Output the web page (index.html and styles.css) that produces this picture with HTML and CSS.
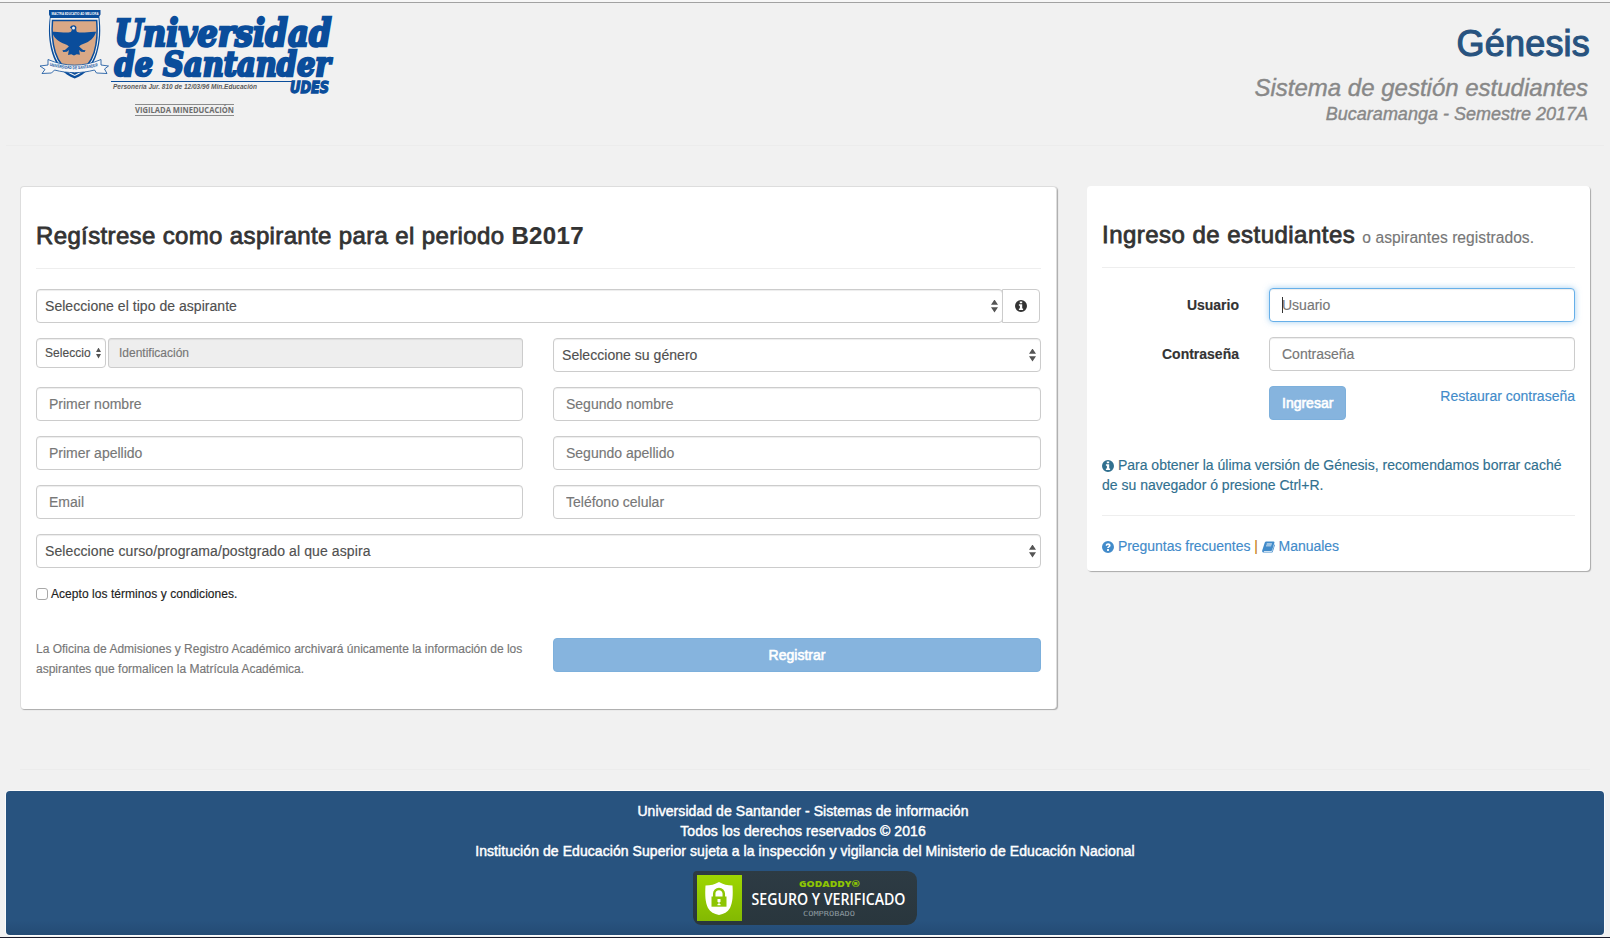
FILE: index.html
```html
<!DOCTYPE html>
<html lang="es">
<head>
<meta charset="utf-8">
<title>Génesis - Universidad de Santander</title>
<link rel="stylesheet" href="styles.css">
</head>
<body>
<svg class="defs" width="0" height="0" aria-hidden="true">
  <symbol id="i-info" viewBox="0 0 12 12"><path fill-rule="evenodd" d="M6 0a6 6 0 1 1 0 12A6 6 0 0 1 6 0ZM4.800 1.500v1.700h2.400V1.500ZM3.900 4.300v1.500h1v2.700h-1V10h4.200V8.500h-.9V4.300Z"/></symbol>
  <symbol id="i-help" viewBox="0 0 12 12"><path fill-rule="evenodd" d="M6 0a6 6 0 1 1 0 12A6 6 0 0 1 6 0ZM3.500 4.300l1.400.7c.3-.6.6-.9 1.100-.9.500 0 .8.200.8.600 0 .8-1.700.9-1.700 2.400h1.800c0-.9 1.700-1.100 1.700-2.600C8.600 3 7.500 2.200 6.100 2.200 4.800 2.200 4 2.900 3.500 4.300ZM5.100 8.100v1.800h1.800V8.100Z"/></symbol>
  <symbol id="i-book" viewBox="0 0 13 12"><path fill-rule="evenodd" d="M4.300.5h7.200c.8 0 1.100.6.9 1.200L10.200 9c-.2.700-.6 1-1.300 1H2.200c-.5 0-.6.700.1.700h7.200c.4 0 .6-.2.700-.5l2.200-7c.6.400.6.800.4 1.400L10.900 10.400c-.3.800-.8 1.200-1.600 1.200H2C.7 11.600-.1 10.500.2 9.500L2.800 1.500C3.100.8 3.600.5 4.300.5ZM4.800 2.500l-.3.900h5.200l.3-.9ZM4.200 4.400l-.3.900h5.200l.3-.9Z"/></symbol>
</svg>
<header class="header">
  <svg class="logo" width="310" height="120" viewBox="30 0 310 120">
    <g>
      <path fill="#0a4d9b" d="M51 10h49.500v4.500l-1.200 2c1.800 13 1.200 25-2.300 37-3.500 12-11 20.500-22.300 25-11.500-4.500-19-13-22.500-25-3.500-12-4-24-2.300-37L49 14.500V10Z"/>
      <path fill="#f1f1f1" d="M50.500 18h48c1.200 13 .5 24-2.800 35-3.500 11-10.500 19-21 23-10.500-4-17.500-12-21-23-3.400-11-4.300-22-3.200-35Z"/>
      <path fill="#d9a886" stroke="#0a4d9b" stroke-width="1.500" d="M52.500 20.500h44.200c1 11 .4 22-2.600 32-3.200 10.500-9.500 17.500-19.400 21.500-9.900-4-16.200-11-19.400-21.500-3-10-3.800-21-2.800-32Z"/>
      <path fill="#0a4d9b" d="M70 27.500c.8-2 2.500-2.600 4.200-2.300 1.800.3 2.600 1.700 2.100 3.500-.2 1.200 0 2 .8 3.300 6 1.600 12-.8 19-.3-1.600 5.800-6 9.800-13 12.300-1.800.7-3 1.300-4 2.500l4 3.500 2.500.2-1 1.800-3.500-.3-2-1.600.8 4.700-3.200-.6-2.700 1.300-2.800-1.300-3.200.8.900-4.900-2 1.600-3.700.3-.8-1.800 2.500-.2 4-3.600c-1-1.200-2.400-1.800-4.200-2.500-7-2.600-11.200-6.500-12.600-12.200 7-.5 13 2 18.600.3 1-1 1.200-1.800.9-3Z"/>
      <circle cx="73.500" cy="28" r="1.500" fill="#f1f1f1"/>
      <path fill="#f7f7f7" stroke="#0a4d9b" stroke-width=".8" d="M40 66l8-1v-5.500c17 7.500 36 7.500 53 0V65l7.500 1-4 3 2.500 4.500-10.500-.5-2-3c-13 3.500-27 3.500-40 0l-3 3-9.500.5 3-4Z"/>
      <path id="ribbon" fill="none" d="M49.500 65.800c17 4.500 33 4.500 50 0"/>
      <text class="crest-text" font-size="4.400"><textPath href="#ribbon" textLength="49" lengthAdjust="spacingAndGlyphs">UNIVERSIDAD DE SANTANDER</textPath></text>
      <text class="crest-band" x="51.500" y="15.200" font-size="4.400" textLength="47" lengthAdjust="spacingAndGlyphs">MACTRA EDUCATIO AD MELIORA</text>
    </g>
    <text class="logo-name" x="114.500" y="45.700" font-size="38" textLength="217" lengthAdjust="spacingAndGlyphs">Universidad</text>
    <text class="logo-name" x="114.500" y="75.700" font-size="34" textLength="216" lengthAdjust="spacingAndGlyphs">de Santander</text>
    <path stroke="#0a4d9b" stroke-width="1" d="M111 81.500h181"/>
    <text class="logo-udes" x="290" y="93" font-size="16" textLength="39" lengthAdjust="spacingAndGlyphs">UDES</text>
    <text class="logo-legal" x="113" y="89" textLength="144" lengthAdjust="spacingAndGlyphs">Personería Jur. 810 de 12/03/96 Min.Educación</text>
    <path stroke="#8a8a8a" stroke-width="1" d="M135 104.500h99M135 115.500h99"/>
    <text class="logo-vig" x="135" y="113" textLength="99" lengthAdjust="spacingAndGlyphs">VIGILADA MINEDUCACIÓN</text>
  </svg>
  <div class="brand">
    <h1 class="brand-name">Génesis</h1>
    <p class="brand-sub">Sistema de gestión estudiantes</p>
    <p class="brand-term">Bucaramanga - Semestre 2017A</p>
  </div>
</header>

<main class="main">
  <section class="panel panel-register">
    <h2 class="title title-register">Regístrese como aspirante para el periodo <b>B2017</b></h2>
    <form class="form">
      <div class="input-group">
        <div class="control select"><span>Seleccione el tipo de aspirante</span><i class="arrows"></i></div>
        <button type="button" class="addon"><svg class="icon" width="12" height="12"><use href="#i-info"/></svg></button>
      </div>
      <div class="row">
        <div class="id-group">
          <div class="control select small"><span>Seleccio</span><i class="arrows"></i></div>
          <input class="control small" placeholder="Identificación" disabled>
        </div>
        <div class="control select"><span>Seleccione su género</span><i class="arrows"></i></div>
      </div>
      <div class="row"><input class="control" placeholder="Primer nombre"><input class="control" placeholder="Segundo nombre"></div>
      <div class="row"><input class="control" placeholder="Primer apellido"><input class="control" placeholder="Segundo apellido"></div>
      <div class="row"><input class="control" placeholder="Email"><input class="control" placeholder="Teléfono celular"></div>
      <div class="control select"><span class="program">Seleccione curso/programa/postgrado al que aspira</span><i class="arrows"></i></div>
      <label class="terms"><i class="check"></i>Acepto los términos y condiciones.</label>
      <div class="row row-submit">
        <p class="note">La Oficina de Admisiones y Registro Académico archivará únicamente la información de los<br>aspirantes que formalicen la Matrícula Académica.</p>
        <button type="button" class="btn">Registrar</button>
      </div>
    </form>
  </section>

  <section class="panel panel-login">
    <h2 class="title title-login">Ingreso de estudiantes <small>o aspirantes registrados.</small></h2>
    <form class="login">
      <label class="label">Usuario</label>
      <div class="focus-wrap"><input class="control focused" placeholder="Usuario"><i class="caret"></i></div>
      <label class="label">Contraseña</label>
      <input class="control" placeholder="Contraseña">
      <div class="actions"><button type="button" class="btn">Ingresar</button><a class="restore">Restaurar contraseña</a></div>
    </form>
    <p class="info"><svg class="icon" width="12" height="12"><use href="#i-info"/></svg> <span>Para obtener la úlima versión de Génesis, recomendamos borrar caché</span><br><span>de su navegador ó presione Ctrl+R.</span></p>
    <p class="links"><a><svg class="icon" width="12" height="12"><use href="#i-help"/></svg> <span>Preguntas frecuentes</span></a> <span class="bar">|</span> <a><svg class="icon" width="13" height="12"><use href="#i-book"/></svg> Manuales</a></p>
  </section>
</main>

<footer class="footer">
  <p class="f-short">Universidad de Santander - Sistemas de información</p>
  <p class="f-short">Todos los derechos reservados © 2016</p>
  <p>Institución de Educación Superior sujeta a la inspección y vigilancia del Ministerio de Educación Nacional</p>
  <svg class="seal" width="224" height="54" viewBox="0 0 224 54">
    <defs>
      <linearGradient id="dark" x2="0" y2="1"><stop stop-color="#2d3b44"/><stop offset="1" stop-color="#29363d"/></linearGradient>
      <linearGradient id="green" x2="0" y2="1"><stop stop-color="#9ed602"/><stop offset="1" stop-color="#83b902"/></linearGradient>
    </defs>
    <path fill="url(#dark)" d="M4 0h210q10 1 10 10v34q-1 9-10 10H8q-7-1-8-8V4q0-4 4-4Z"/>
    <path fill="url(#green)" d="M4 4h45v46H4Z"/>
    <path fill="#fff" d="M26 11c4 2.500 8.500 3.500 13.500 3.500.6 10 .2 17-2.500 22.500-2.400 4-6 6-11 7-5-1-8.600-3-11-7-2.700-5.500-3.100-12.500-2.500-22.500C17.500 14.500 22 13.500 26 11Z"/>
    <path fill="none" stroke="#8dc503" stroke-width="2.500" d="M21.200 26v-3.200a4.800 4.800 0 0 1 9.600 0V26"/>
    <path fill="#8dc503" d="M18.500 25.500h15v10.200h-15Z"/>
    <path fill="#fff" d="M24.500 28h3v3h-1v2h1v1.200h-3V33h1v-2h-1Z"/>
    <text class="s-top" x="106" y="16" textLength="61" lengthAdjust="spacingAndGlyphs">GODADDY®</text>
    <text class="s-mid" x="58.500" y="34.200" textLength="154" lengthAdjust="spacingAndGlyphs">SEGURO Y VERIFICADO</text>
    <text class="s-low" x="110" y="44.500" textLength="52" lengthAdjust="spacingAndGlyphs">COMPROBADO</text>
  </svg>
</footer>
<div class="bottom-edge"></div>
</body>
</html>
```
FILE: styles.css
```css
* { box-sizing: border-box; }
html, body { height: 938px; overflow: hidden; }
body {
  margin: 0;
  padding: 0 6px;
  background: linear-gradient(#f7f7f7 0 2px, #a2a2a2 2px 3px, #f1f1f1 3px);
  font: 14px/20px "Liberation Sans", Arial, sans-serif;
  color: #333;
  -webkit-text-stroke-width: .15px;
  display: flex;
  flex-direction: column;
}
p, h1, h2 { margin: 0; font-weight: 400; }
.defs { position: absolute; }

.header {
  height: 146px;
  flex: none;
  display: flex;
  justify-content: space-between;
  padding: 0 14px 0 24px;
  border-bottom: 1px solid #ececec;
}
.logo { overflow: visible; -webkit-text-stroke-width: 0; }
.brand { text-align: right; padding-top: 24px; }
.brand-name { font-size: 36px; line-height: 40px; color: #28537f; -webkit-text-stroke: 1.100px #28537f; letter-spacing: .2px; }
.brand-sub, .brand-term { font-style: italic; color: #888; -webkit-text-stroke: .4px #888; padding-right: 2px; }
.brand-sub { font-size: 24px; line-height: 28px; margin-top: 10px; }
.brand-term { font-size: 18px; line-height: 24px; }

.logo-name {
  font-family: "DejaVu Serif", serif;
  font-weight: 700;
  font-style: italic;
  fill: #0a4d9b;
  -webkit-text-stroke: 0;
  stroke: #0a4d9b;
  stroke-width: 2.600px;
}
.logo-udes {
  font-family: "DejaVu Sans Condensed", "DejaVu Sans", sans-serif;
  font-weight: 700;
  font-style: italic;
  fill: #0a4d9b;
  stroke: #0a4d9b;
  stroke-width: 1.300px;
}
.logo-legal { font: italic 700 7px "Liberation Sans", sans-serif; fill: #5a5a5a; }
.logo-vig { font: 700 8.500px "Open Sans", sans-serif; fill: #6c6c6c; }
.crest-text { font-family: "Liberation Sans", sans-serif; font-weight: 700; fill: #0a4d9b; }
.crest-band { font-family: "Liberation Sans", sans-serif; font-weight: 700; fill: #fff; }

.main {
  display: grid;
  grid-template-columns: 1037px 503px;
  justify-content: space-between;
  align-items: start;
  margin: 0 14px;
  padding-top: 40px;
  border-bottom: 1px solid #ececec;
  height: 624px;
  flex: none;
}
.panel { background: #fff; border-radius: 4px; box-shadow: 1px 1px 1px #a9a9a9; }
.panel-register { height: 523px; padding: 0 16px; border: 1px solid #ddd; border-width: 1px 1px 0; }
.panel-login { height: 385px; padding: 0 15px; }
.title { height: 82px; font-size: 24px; line-height: 28px; -webkit-text-stroke: .8px #333; border-bottom: 1px solid #eee; white-space: nowrap; }
.title b { font-weight: 700; -webkit-text-stroke: .2px #333; }
.title-register { padding-top: 35px; margin: 0 -1px 20px; letter-spacing: .36px; }
.title-login { padding-top: 35px; margin-bottom: 20px; letter-spacing: .47px; }
.title small { font-size: 15.600px; color: #777; letter-spacing: .04px; -webkit-text-stroke: .15px #777; }

.form { display: grid; gap: 15px; margin: 0 -1px; }
.row { display: grid; grid-template-columns: 487px 488px; justify-content: space-between; align-items: start; }
.control {
  width: 100%;
  height: 34px;
  margin: 0;
  padding: 6px 12px;
  border: 1px solid #ccc;
  border-radius: 4px;
  background: #fff;
  box-shadow: inset 0 1px 1px rgba(0,0,0,.075);
  font: inherit;
  color: #555;
}
.control::placeholder { color: #777; opacity: 1; }
.select { display: flex; justify-content: space-between; align-items: center; padding: 0 4px 0 8px; color: #505050; letter-spacing: .04px; }
.program { letter-spacing: .1px; }
.arrows { width: 7px; height: 13px; background: #555; clip-path: polygon(50% 0, 100% 41%, 0 41%, 0 59%, 100% 59%, 50% 100%, 0 59%, 0 41%); }
.small .arrows { width: 5px; height: 11px; }
.input-group { display: grid; grid-template-columns: 967px 37px; }
.addon { margin-left: -1px; width: 38px; padding: 0; height: 34px; border: 1px solid #ccc; border-radius: 0 4px 4px 0; background: #fff; color: #333; display: flex; align-items: center; justify-content: center; }
.id-group { display: grid; grid-template-columns: 70px 415px; gap: 2px; }
.small { height: 30px; font-size: 12px; padding: 5px 10px; border-radius: 3px; }
.select.small { padding: 0 4px 0 8px; border-radius: 4px; }
.control:disabled { background: #eee; }
.terms { display: flex; align-items: center; gap: 3px; height: 20px; margin-top: 1px; font-size: 12px; color: #222; letter-spacing: .05px; }
.check { width: 12px; height: 12px; border: 1px solid #a8a8a8; border-radius: 3px; background: #fff; }
.row-submit { margin-top: 19px; }
.note { padding-top: 1px; font-size: 12px; color: #777; white-space: nowrap; }
.btn {
  height: 34px;
  padding: 0 12px;
  border: 1px solid #7db0dc;
  border-radius: 4px;
  background: #86b4de;
  color: #fff;
  font: inherit;
  -webkit-text-stroke: .6px #fff;
}

.login { display: grid; grid-template-columns: 137px 306px; column-gap: 30px; row-gap: 15px; }
.label { text-align: right; font-weight: 700; line-height: 34px; }
.focus-wrap { position: relative; }
.focused { border-color: #66afe9; box-shadow: inset 0 1px 1px rgba(0,0,0,.075), 0 0 6px rgba(102,175,233,.6); }
.caret { position: absolute; left: 13px; top: 9px; width: 1px; height: 16px; background: #333; }
.actions { grid-column: 2; display: flex; justify-content: space-between; align-items: start; }
.restore, .links a { color: #428bca; }
.icon { fill: currentColor; vertical-align: -1.500px; }
.info { margin-top: 35px; padding-bottom: 20px; border-bottom: 1px solid #eee; color: #31708f; white-space: nowrap; }
.links { margin-top: 20px; white-space: nowrap; letter-spacing: -.03px; }
.bar { color: #c77c11; }

.footer {
  flex: none;
  height: 144px;
  margin-top: 21px;
  padding-top: 10px;
  border-radius: 4px;
  background: linear-gradient(#28537f 90%, #244b74);
  box-shadow: 0 0 0 1px #fbfbfb;
  color: #fff;
  text-align: center;
  letter-spacing: .07px;
  -webkit-text-stroke: .45px #fff;
}
.f-short { padding-right: 4px; }
.seal { display: block; margin: 10px auto 0; letter-spacing: 0; -webkit-text-stroke: 0; }
.s-top { font: 800 9.500px "Open Sans", sans-serif; fill: #8dc503; }
.s-mid { font: 600 17px "Open Sans", sans-serif; fill: #fff; }
.s-low { font: 7px "DejaVu Sans Mono", monospace; fill: #8a979e; }
.bottom-edge { height: 1px; margin: 2px -6px 0; background: #1c1c2b; flex: none; }
```
